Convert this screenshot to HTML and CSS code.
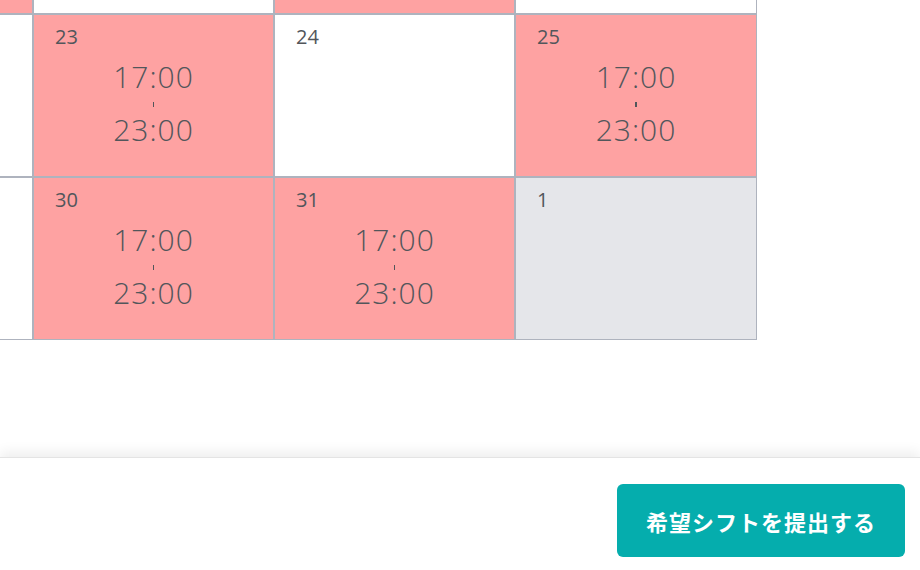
FILE: index.html
```html
<!DOCTYPE html>
<html lang="ja">
<head>
<meta charset="utf-8">
<title>希望シフト</title>
<link rel="stylesheet" href="styles.css">
</head>
<body>
<div class="page">
  <main class="calendar-area">
    <div class="calendar">
      <div class="cell shift"><span class="day">15</span></div>
      <div class="cell"><span class="day">16</span></div>
      <div class="cell shift"><span class="day">17</span></div>
      <div class="cell"><span class="day">18</span></div>

      <div class="cell"><span class="day">22</span></div>
      <div class="cell shift">
        <span class="day">23</span>
        <div class="time"><span>17:00</span><i class="tick"></i><span>23:00</span></div>
      </div>
      <div class="cell"><span class="day">24</span></div>
      <div class="cell shift">
        <span class="day">25</span>
        <div class="time"><span>17:00</span><i class="tick"></i><span>23:00</span></div>
      </div>

      <div class="cell"><span class="day">29</span></div>
      <div class="cell shift">
        <span class="day">30</span>
        <div class="time"><span>17:00</span><i class="tick"></i><span>23:00</span></div>
      </div>
      <div class="cell shift">
        <span class="day">31</span>
        <div class="time"><span>17:00</span><i class="tick"></i><span>23:00</span></div>
      </div>
      <div class="cell other"><span class="day">1</span></div>
    </div>
  </main>
  <footer class="footer">
    <button class="submit" type="button">希望シフトを提出する</button>
  </footer>
</div>
</body>
</html>
```

FILE: styles.css
```css
* { box-sizing: border-box; }
html, body { margin: 0; padding: 0; background: #fff; }
body {
  font-family: "Open Sans", "Noto Sans CJK JP", sans-serif;
  color: #52565b;
}
.page {
  width: 920px;
  height: 570px;
  display: flex;
  flex-direction: column;
  overflow: hidden;
}
.calendar-area {
  flex: 0 0 457px;
  overflow: hidden;
}
.calendar {
  display: grid;
  grid-template-columns: 241px 241px 241px 242px;
  grid-auto-rows: 163px;
  margin-top: -149px;
  margin-left: -208px;
  width: max-content;
}
.cell {
  border: 1px solid #aeb3be;
  background: #fff;
  padding: 10px 21px 0;
  display: flex;
  flex-direction: column;
}
.cell.shift { background: #fea2a2; }
.cell.other { background: #e5e6ea; }
.day {
  font-size: 20px;
  line-height: 24px;
  font-weight: 400;
}
.time {
  margin-top: 13px;
  display: flex;
  flex-direction: column;
  align-items: center;
  font-size: 30px;
  line-height: 30px;
  font-weight: 300;
  letter-spacing: 1px;
  margin-left: -21px;
  margin-right: -21px;
}
.tick {
  display: block;
  width: 1.5px;
  height: 5px;
  background: #52565b;
  margin: 10px 0 8px;
}
.footer {
  flex: 1;
  border-top: 1px solid #e4e4e4;
  box-shadow: 0 -5px 12px rgba(0, 0, 0, 0.07);
  background: #fff;
  display: flex;
  justify-content: flex-end;
  align-items: flex-start;
  padding: 26px 15px 0 0;
}
.submit {
  width: 288px;
  height: 73px;
  border: none;
  border-radius: 6px;
  background: #05adad;
  color: #fff;
  font-family: "Noto Sans CJK JP", sans-serif;
  font-weight: 700;
  font-size: 22px;
  letter-spacing: 1px;
  padding: 0;
  cursor: pointer;
}
```
